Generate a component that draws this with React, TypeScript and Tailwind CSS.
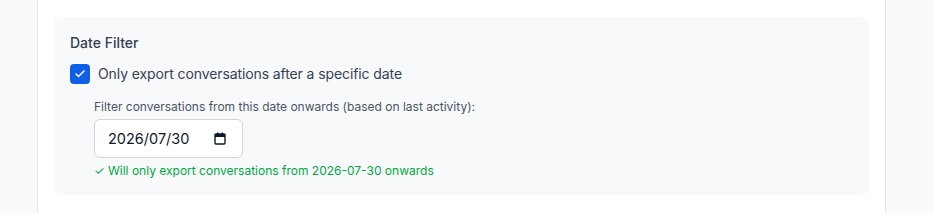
import { Check } from "lucide-react";

const font = { fontFamily: "Inter, 'Noto Sans', sans-serif" };

const CalendarIcon = () => (
  <svg width="12" height="13" viewBox="0 0 12 13" fill="none" className="text-gray-900">
    <rect x="1" y="2" width="10" height="10" rx="1" stroke="currentColor" strokeWidth="1.4" />
    <rect x="1" y="2" width="10" height="3" fill="currentColor" />
    <rect x="3" y="0.5" width="1.4" height="2.5" fill="currentColor" />
    <rect x="7.6" y="0.5" width="1.4" height="2.5" fill="currentColor" />
  </svg>
);

export default function App() {
  return (
    <div className="flex h-[213px] w-full bg-gray-50" style={font}>
      {/* left gutter */}
      <div className="w-[38px] shrink-0 bg-gray-50 border-r border-gray-200" />

      {/* main panel */}
      <div className="flex-1 bg-white px-4 pt-[17px]">
        <div className="rounded-lg bg-[#f8f9fb] px-4 pt-[14px] h-[178px]">
          <h3 className="text-sm font-medium text-gray-700 leading-6">Date Filter</h3>

          <label className="mt-[9px] flex items-center gap-2">
            <span className="flex h-5 w-5 items-center justify-center rounded bg-[#0f5fe6]">
              <Check className="h-3 w-3 text-white" strokeWidth={3} />
            </span>
            <span className="text-sm tracking-[-0.1px] text-gray-700">
              Only export conversations after a specific date
            </span>
          </label>

          <div className="ml-6 mt-[15px]">
            <p className="text-xs text-gray-600">
              Filter conversations from this date onwards (based on last activity):
            </p>
            <div className="mt-[4px] flex h-[39px] w-[149px] items-center justify-between rounded-md border border-gray-300 bg-white pl-[13px] pr-[16px]">
              <span className="text-[14.5px] text-gray-900">2026/07/30</span>
              <CalendarIcon />
            </div>
            <p className="mt-[5px] text-xs text-green-600">
              ✓ Will only export conversations from 2026-07-30 onwards
            </p>
          </div>
        </div>
      </div>

      {/* right gutter */}
      <div className="w-[49px] shrink-0 bg-gray-50 border-l border-gray-200" />
    </div>
  );
}
